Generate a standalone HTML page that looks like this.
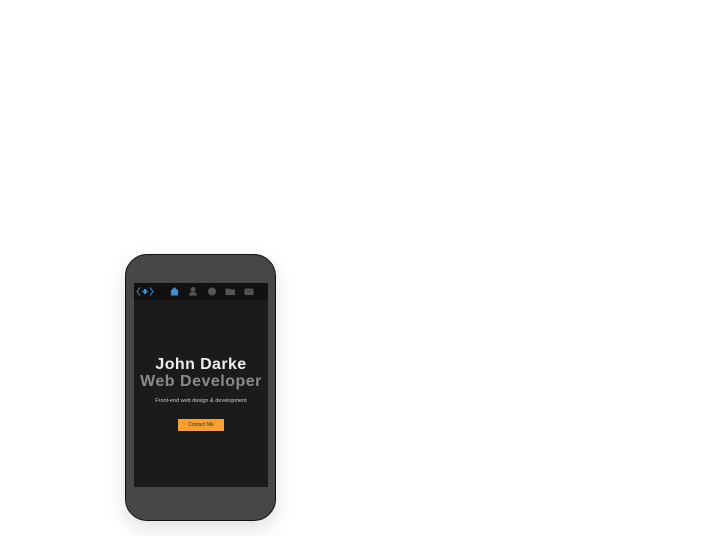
<!DOCTYPE html><html><head><style>
body{margin:0;width:705px;height:536px;background:#fff;position:relative;overflow:hidden;font-family:"Liberation Sans",sans-serif}
.ph{position:absolute;left:125px;top:254px;width:149px;height:265px;background:#474747;border:1px solid #111;border-radius:22px;box-shadow:0 8px 20px rgba(0,0,0,.12)}
.sc{position:absolute;left:134px;top:283px;width:134px;height:204px;background:#1b1b1b}
.nav{position:absolute;left:0;top:0;width:134px;height:17px;background:#111}
.t{position:absolute;left:0;width:134px;text-align:center;font-weight:bold;letter-spacing:.4px}
.btn{position:absolute;left:44px;top:136px;width:46px;height:12px;background:#f5a030;font-size:5px;line-height:12px;text-align:center;color:#333}
</style></head><body>
<div class="ph"></div>
<div class="sc">
<div class="nav">
<svg width="134" height="17" style="position:absolute;left:0;top:0">
<path d="M6 4.5 L3 8.5 L6 12.5 M16 4.5 L19 8.5 L16 12.5" stroke="#3a8fd8" fill="none" stroke-width="1"/>
<path d="M8.5 8.5 L13.5 8.5 M11 6 L11 11" stroke="#3a8fd8" stroke-width="2"/>
<path d="M36 8.5 L40.5 4 L45 8.5 L44 8.5 L44 12.5 L37 12.5 L37 8.5Z" fill="#3a8fd8"/>
<circle cx="59" cy="6.5" r="2.5" fill="#555"/><path d="M55 12.5 Q55 9 59 9 Q63 9 63 12.5Z" fill="#555"/>
<circle cx="78" cy="8.5" r="4" fill="#555"/>
<path d="M91.5 5.5 L95 5.5 L96 6.5 L101 6.5 L101 12 L91.5 12Z" fill="#555"/>
<rect x="110.5" y="5.5" width="9" height="6.5" fill="#555"/><path d="M110.5 5.5 L115 9 L119.5 5.5" stroke="#333" fill="none" stroke-width=".7"/>
</svg></div>
<div class="t" style="top:73px;font-size:16px;color:#eee">John Darke</div>
<div class="t" style="top:90px;font-size:16px;color:#8a8a8a;letter-spacing:.5px">Web Developer</div>
<div class="t" style="top:115px;font-size:5.5px;color:#ccc;font-weight:normal;letter-spacing:0">Front-end web design &amp; development</div>
<div class="btn">Contact Me</div>
</div>
</body></html>
